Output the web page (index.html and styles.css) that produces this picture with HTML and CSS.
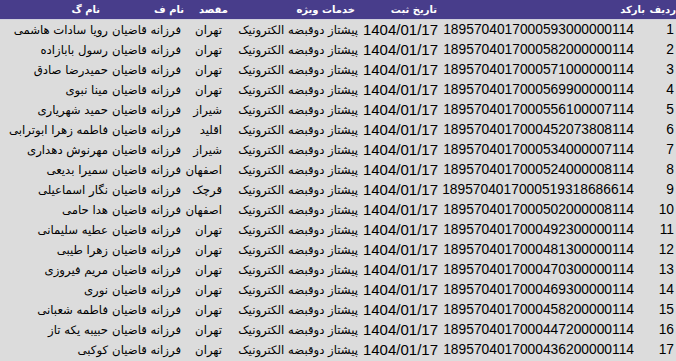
FILE: index.html
```html
<!DOCTYPE html>
<html lang="fa" dir="rtl">
<head>
<meta charset="utf-8">
<title>لیست مرسولات</title>
<link rel="stylesheet" href="styles.css">
</head>
<body>
<div class="grid">
  <div class="row head">
    <div class="c c-id">ردیف</div>
    <div class="c c-bar">بارکد</div>
    <div class="c c-date">تاریخ ثبت</div>
    <div class="c c-srv">خدمات ویژه</div>
    <div class="c c-dst">مقصد</div>
    <div class="c c-lf">نام ف</div>
    <div class="c c-lg">نام گ</div>
  </div>
  <div class="row"><div class="c c-id">1</div><div class="c c-bar">1895704017000593000000114</div><div class="c c-date">1404/01/17</div><div class="c c-srv">پیشتاز دوقبضه الکترونیک</div><div class="c c-dst">تهران</div><div class="c c-lf">فرزانه قاضیان</div><div class="c c-lg">رویا سادات هاشمی</div></div>
  <div class="row"><div class="c c-id">2</div><div class="c c-bar">1895704017000582000000114</div><div class="c c-date">1404/01/17</div><div class="c c-srv">پیشتاز دوقبضه الکترونیک</div><div class="c c-dst">تهران</div><div class="c c-lf">فرزانه قاضیان</div><div class="c c-lg">رسول بابازاده</div></div>
  <div class="row"><div class="c c-id">3</div><div class="c c-bar">1895704017000571000000114</div><div class="c c-date">1404/01/17</div><div class="c c-srv">پیشتاز دوقبضه الکترونیک</div><div class="c c-dst">تهران</div><div class="c c-lf">فرزانه قاضیان</div><div class="c c-lg">حمیدرضا صادق</div></div>
  <div class="row"><div class="c c-id">4</div><div class="c c-bar">1895704017000569900000114</div><div class="c c-date">1404/01/17</div><div class="c c-srv">پیشتاز دوقبضه الکترونیک</div><div class="c c-dst">تهران</div><div class="c c-lf">فرزانه قاضیان</div><div class="c c-lg">مینا نبوی</div></div>
  <div class="row"><div class="c c-id">5</div><div class="c c-bar">1895704017000556100007114</div><div class="c c-date">1404/01/17</div><div class="c c-srv">پیشتاز دوقبضه الکترونیک</div><div class="c c-dst">شیراز</div><div class="c c-lf">فرزانه قاضیان</div><div class="c c-lg">حمید شهریاری</div></div>
  <div class="row"><div class="c c-id">6</div><div class="c c-bar">1895704017000452073808114</div><div class="c c-date">1404/01/17</div><div class="c c-srv">پیشتاز دوقبضه الکترونیک</div><div class="c c-dst">اقلید</div><div class="c c-lf">فرزانه قاضیان</div><div class="c c-lg">فاطمه زهرا ابوترابی</div></div>
  <div class="row"><div class="c c-id">7</div><div class="c c-bar">1895704017000534000007114</div><div class="c c-date">1404/01/17</div><div class="c c-srv">پیشتاز دوقبضه الکترونیک</div><div class="c c-dst">شیراز</div><div class="c c-lf">فرزانه قاضیان</div><div class="c c-lg">مهرنوش دهداری</div></div>
  <div class="row"><div class="c c-id">8</div><div class="c c-bar">1895704017000524000008114</div><div class="c c-date">1404/01/17</div><div class="c c-srv">پیشتاز دوقبضه الکترونیک</div><div class="c c-dst">اصفهان</div><div class="c c-lf">فرزانه قاضیان</div><div class="c c-lg">سمیرا بدیعی</div></div>
  <div class="row"><div class="c c-id">9</div><div class="c c-bar">1895704017000519318686614</div><div class="c c-date">1404/01/17</div><div class="c c-srv">پیشتاز دوقبضه الکترونیک</div><div class="c c-dst">قرچک</div><div class="c c-lf">فرزانه قاضیان</div><div class="c c-lg">نگار اسماعیلی</div></div>
  <div class="row"><div class="c c-id">10</div><div class="c c-bar">1895704017000502000008114</div><div class="c c-date">1404/01/17</div><div class="c c-srv">پیشتاز دوقبضه الکترونیک</div><div class="c c-dst">اصفهان</div><div class="c c-lf">فرزانه قاضیان</div><div class="c c-lg">هدا حامی</div></div>
  <div class="row"><div class="c c-id">11</div><div class="c c-bar">1895704017000492300000114</div><div class="c c-date">1404/01/17</div><div class="c c-srv">پیشتاز دوقبضه الکترونیک</div><div class="c c-dst">تهران</div><div class="c c-lf">فرزانه قاضیان</div><div class="c c-lg">عطیه سلیمانی</div></div>
  <div class="row"><div class="c c-id">12</div><div class="c c-bar">1895704017000481300000114</div><div class="c c-date">1404/01/17</div><div class="c c-srv">پیشتاز دوقبضه الکترونیک</div><div class="c c-dst">تهران</div><div class="c c-lf">فرزانه قاضیان</div><div class="c c-lg">زهرا طیبی</div></div>
  <div class="row"><div class="c c-id">13</div><div class="c c-bar">1895704017000470300000114</div><div class="c c-date">1404/01/17</div><div class="c c-srv">پیشتاز دوقبضه الکترونیک</div><div class="c c-dst">تهران</div><div class="c c-lf">فرزانه قاضیان</div><div class="c c-lg">مریم فیروزی</div></div>
  <div class="row"><div class="c c-id">14</div><div class="c c-bar">1895704017000469300000114</div><div class="c c-date">1404/01/17</div><div class="c c-srv">پیشتاز دوقبضه الکترونیک</div><div class="c c-dst">تهران</div><div class="c c-lf">فرزانه قاضیان</div><div class="c c-lg">نوری</div></div>
  <div class="row"><div class="c c-id">15</div><div class="c c-bar">1895704017000458200000114</div><div class="c c-date">1404/01/17</div><div class="c c-srv">پیشتاز دوقبضه الکترونیک</div><div class="c c-dst">تهران</div><div class="c c-lf">فرزانه قاضیان</div><div class="c c-lg">فاطمه شعبانی</div></div>
  <div class="row"><div class="c c-id">16</div><div class="c c-bar">1895704017000447200000114</div><div class="c c-date">1404/01/17</div><div class="c c-srv">پیشتاز دوقبضه الکترونیک</div><div class="c c-dst">تهران</div><div class="c c-lf">فرزانه قاضیان</div><div class="c c-lg">حبیبه یکه تاز</div></div>
  <div class="row"><div class="c c-id">17</div><div class="c c-bar">1895704017000436200000114</div><div class="c c-date">1404/01/17</div><div class="c c-srv">پیشتاز دوقبضه الکترونیک</div><div class="c c-dst">تهران</div><div class="c c-lf">فرزانه قاضیان</div><div class="c c-lg">کوکبی</div></div>
</div>
</body>
</html>
```

FILE: styles.css
```css
html, body {
  margin: 0;
  padding: 0;
  background: #dcdcdc;
}
body {
  width: 676px;
  height: 361px;
  overflow: hidden;
  font-family: "DejaVu Sans", "Liberation Sans", sans-serif;
  color: #000;
}
.grid {
  direction: rtl;
  display: flex;
  flex-direction: column;
}
.row {
  display: grid;
  grid-template-columns: 30px 206px 80px 122px 54px 76px 108px;
  height: 20px;
  align-items: center;
  white-space: nowrap;
}
.c {
  text-align: right;
  font-size: 11.7px;
  line-height: 20px;
}
.head {
  background: #483d8b;
  color: #fff;
  height: 19px;
  border-bottom: 1px solid #cfcfdc;
}
.head .c {
  font-weight: bold;
  font-size: 10px;
  line-height: 17px;
}
.row:not(.head) .c-id,
.row:not(.head) .c-bar,
.row:not(.head) .c-date {
  font-family: "Liberation Sans", sans-serif;
}
.row:not(.head) .c-id,
.row:not(.head) .c-bar { font-size: 13.8px; }
.row:not(.head) .c-date { font-size: 15px; }
.c-id { padding-right: 2px; }
.head .c-id { padding-right: 0; }
.row:not(.head) .c-bar { padding-right: 12px; }
.head .c-bar { padding-right: 1px; }
.c-date { padding-right: 2px; }
.head .c-date { padding-right: 3px; }
.c-srv { padding-right: 2px; }
.head .c-srv { padding-right: 5px; }
.row:not(.head) .c-dst { padding-right: 16px; }
.head .c-dst { padding-right: 10px; }
.row:not(.head) .c-lf { padding-right: 3px; }
.head .c-lf { padding-right: 0; }
.row:not(.head) .c-lg { padding-right: 0; }
.head .c-lg { padding-right: 8px; }
```
